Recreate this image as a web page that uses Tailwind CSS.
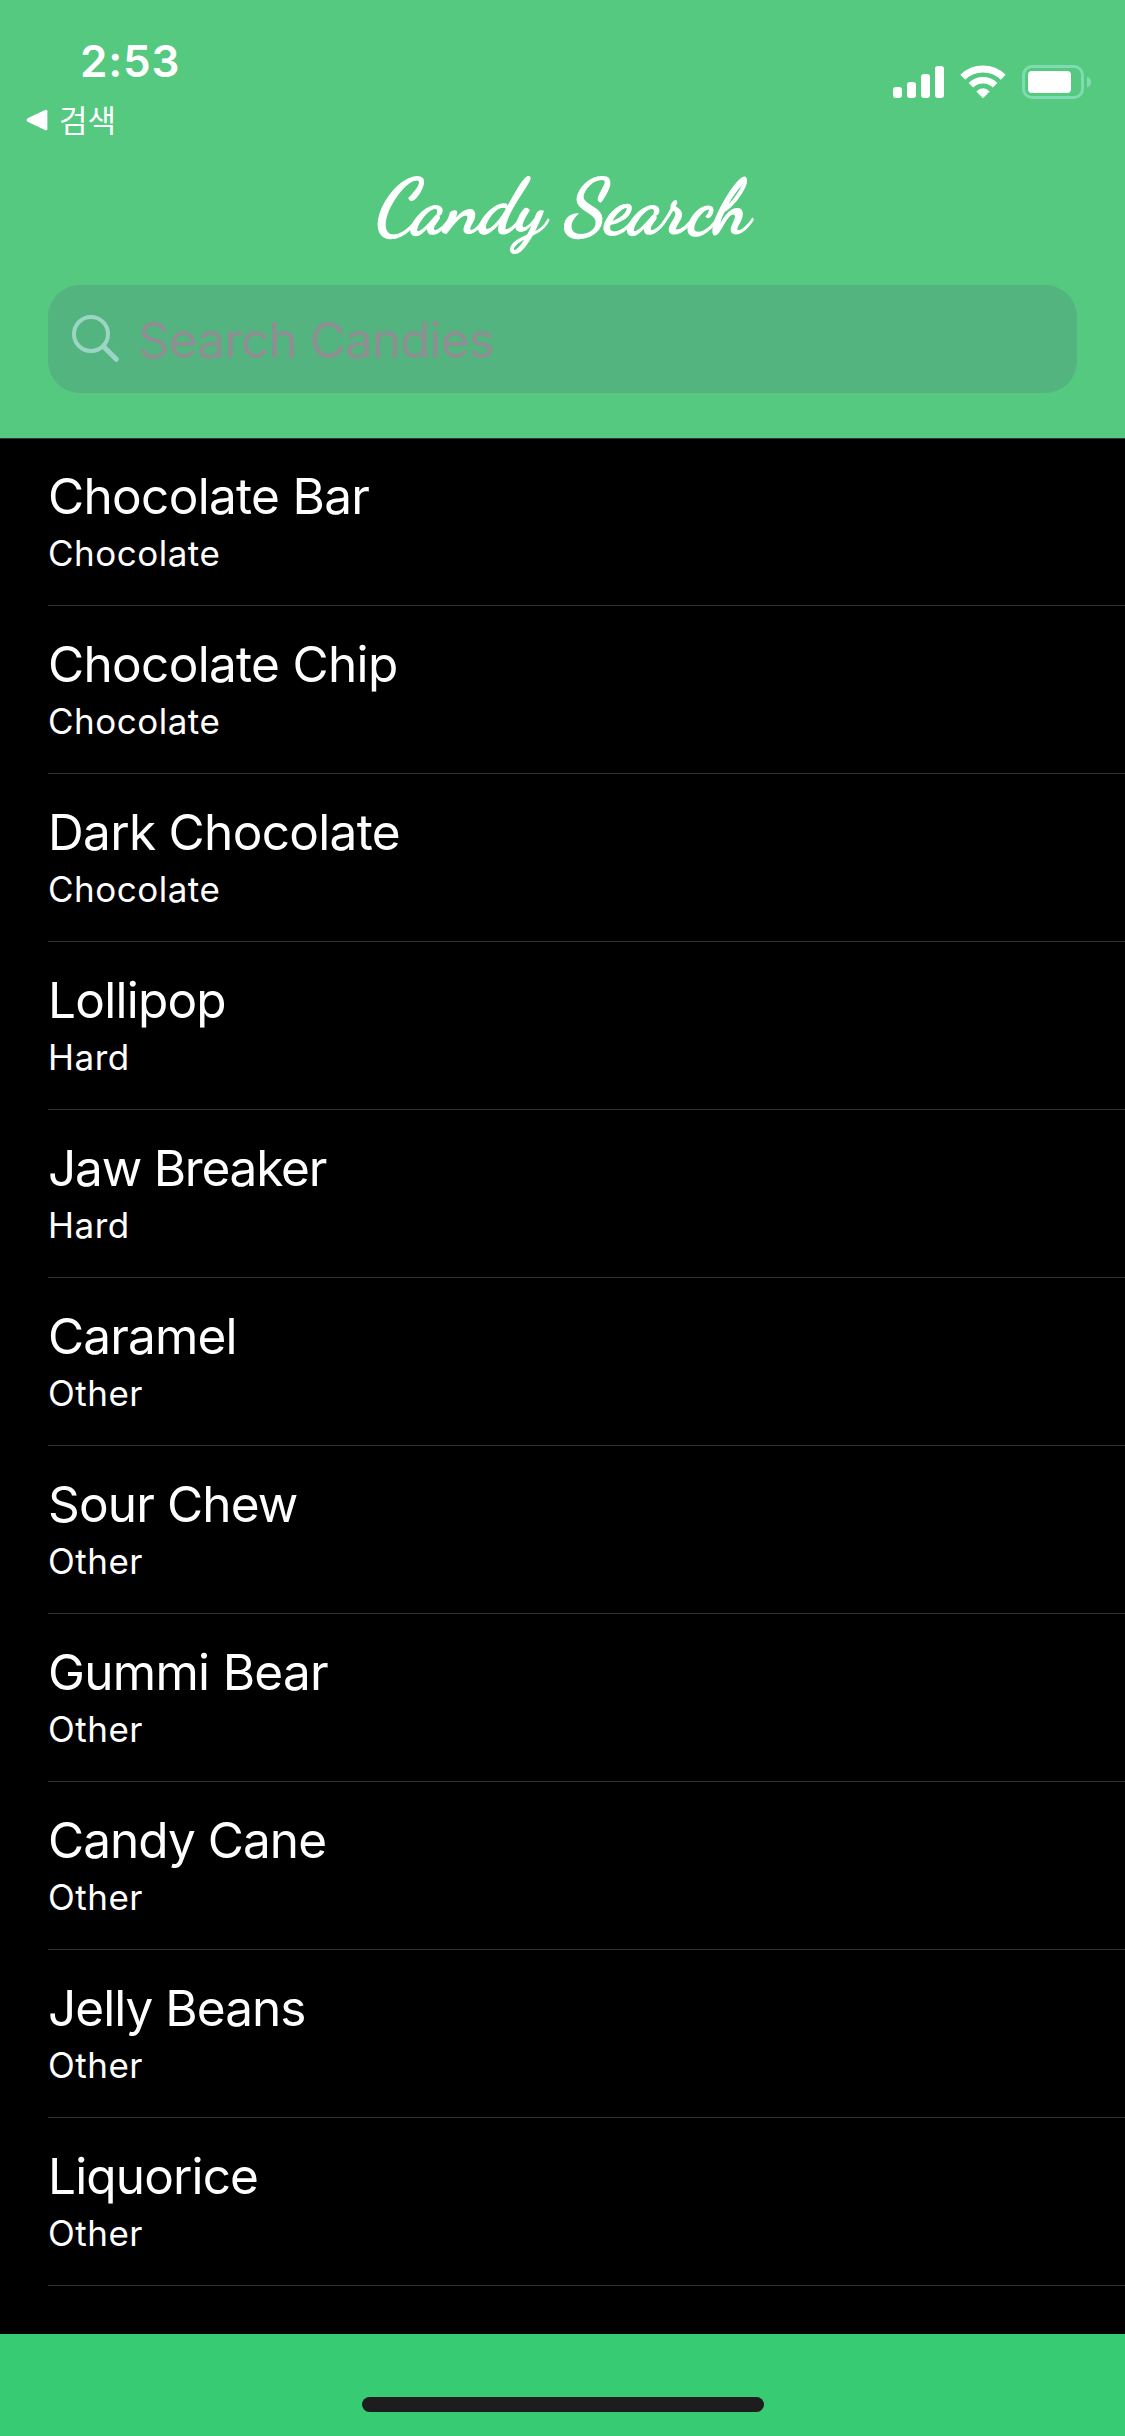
<!DOCTYPE html>
<html lang="ko">
<head>
<meta charset="utf-8">
<title>Candy Search</title>
<script src="https://cdn.jsdelivr.net/npm/@tailwindcss/browser@4"></script>
</head>
<body class="flex h-[2436px] w-[1125px] flex-col overflow-hidden bg-black font-['Inter','Noto_Sans_CJK_KR',sans-serif] text-white">
  <header class="h-[439px] shrink-0 border-b border-[#333333] bg-[#54c97f]">
    <!-- status bar -->
    <div class="flex h-[150px] justify-between pr-[33px]">
      <div class="flex flex-col pt-[34px]">
        <div class="pl-[80px] text-[44px] leading-[54px] font-[560] tracking-[0.8px]">2:53</div>
        <div class="mt-[9px] flex h-[46px] items-center gap-[11px] pl-[26px]">
          <svg class="h-[22px] w-[22px]" viewBox="0 0 22 22" fill="#fff"><path d="M1.6 9.2 19 .9Q21.400 0 21.400 2.300V19.700Q21.400 22 19 21.100L1.600 12.800Q-.5 11 1.600 9.200Z"/></svg>
          <span class="pb-[3px] text-[31px] leading-[43px] font-['Noto_Sans_CJK_KR',sans-serif]">검색</span>
        </div>
      </div>
      <svg class="mt-[60px] h-[44px] w-[200px]" viewBox="892 60 200 44">
        <g fill="#fff">
          <rect x="893" y="87" width="9" height="11" rx="3"/>
          <rect x="907" y="82" width="9" height="16" rx="3"/>
          <rect x="921" y="74" width="9" height="24" rx="3"/>
          <rect x="935" y="66" width="9" height="32" rx="3"/>
          <path d="M983 98.300 976.300 91.500Q983 85 989.700 91.500Z"/>
          <rect x="1028" y="71" width="43" height="22" rx="4"/>
        </g>
        <g fill="none" stroke="#fff">
          <path d="M962.800 77.200A29 29 0 0 1 1003.200 77.200" stroke-width="7"/>
          <path d="M970.900 85.200A17.300 17.300 0 0 1 995.100 85.200" stroke-width="6.500"/>
        </g>
        <rect x="1023.500" y="66.500" width="59" height="31" rx="8.500" fill="none" stroke="#7fdcb0" stroke-width="3"/>
        <path d="M1087 76.500Q1091 78 1091 82T1087 87.500Z" fill="#7fdcb0"/>
      </svg>
    </div>
    <!-- navigation title -->
    <svg class="h-[135px] w-full" viewBox="0 150 1125 135">
      <text transform="translate(374 232) skewX(-10) scale(1 1.07)" x="0" y="0" textLength="374" lengthAdjust="spacingAndGlyphs" fill="#fff" stroke="#fff" stroke-width="1" class="text-[72px] font-bold font-['Dancing_Script',cursive]">Candy Search</text>
    </svg>
    <!-- search field -->
    <div class="mx-[48px] flex h-[108px] items-center rounded-[32px] bg-[#53b47f] pl-[22px]">
      <svg class="h-[52px] w-[52px]" viewBox="70 313 52 52" fill="none" stroke="#9bd6c5" stroke-width="4"><circle cx="91" cy="334" r="17"/><path d="M103.500 346.500 116.300 359.300" stroke-width="5" stroke-linecap="round"/></svg>
      <span class="ml-[16px] pt-px text-[49.5px] leading-[60px] tracking-[-0.92px] text-[#8e8e93]">Search Candies</span>
    </div>
  </header>

  <main id="list" class="flex-1 overflow-hidden pl-[48px]"></main>

  <footer class="flex h-[102px] shrink-0 items-end justify-center bg-[#37cb73] pb-[24px]">
    <div class="h-[15px] w-[402px] rounded-full bg-[#1d1d1d]"></div>
  </footer>

  <script>
    // name, category, letter spacing of the name
    const candies = [
      ['Chocolate Bar', 'Chocolate', -0.68], ['Chocolate Chip', 'Chocolate', -0.68], ['Dark Chocolate', 'Chocolate', -0.68],
      ['Lollipop', 'Hard', -0.75], ['Jaw Breaker', 'Hard', -1.2], ['Caramel', 'Other', -0.85], ['Sour Chew', 'Other', -0.85],
      ['Gummi Bear', 'Other', -0.7], ['Candy Cane', 'Other', -0.95], ['Jelly Beans', 'Other', -0.95], ['Liquorice', 'Other', -0.85],
    ];
    document.getElementById('list').innerHTML = candies.map(([name, kind, spacing], i) => `
      <div class="${i ? 'h-[168px] pt-[28px]' : 'h-[167px] pt-[27px]'} border-b border-[#333333]">
        <div class="text-[49.5px] leading-[60px]" style="letter-spacing:${spacing}px">${name}</div>
        <div class="mt-[6px] text-[35px] leading-[42px] tracking-[0.5px]">${kind}</div>
      </div>`).join('');
  </script>
</body>
</html>
